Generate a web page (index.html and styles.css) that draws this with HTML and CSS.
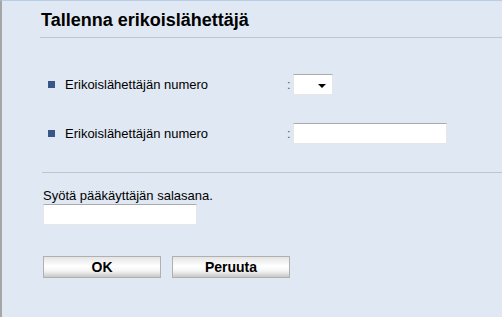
FILE: index.html
```html
<!DOCTYPE html>
<html lang="fi">
<head>
    <meta charset="UTF-8">
    <title>Tallenna erikoislähettäjä</title>
    <link rel="stylesheet" href="styles.css">
</head>
<body>
    <div class="page">
        <div class="title">Tallenna erikoislähettäjä</div>

        <div class="fields">
            <div class="field-row">
                <span class="bullet"></span>
                <span class="label">Erikoislähettäjän numero</span>
                <span class="colon">:</span>
                <div class="select-box"><span class="arrow"></span></div>
            </div>
            <div class="field-row">
                <span class="bullet"></span>
                <span class="label">Erikoislähettäjän numero</span>
                <span class="colon">:</span>
                <div class="text-box wide"></div>
            </div>
        </div>

        <div class="password">
            <div class="pw-label">Syötä pääkäyttäjän salasana.</div>
            <div class="text-box pw"></div>
        </div>

        <div class="buttons">
            <button class="btn">OK</button>
            <button class="btn">Peruuta</button>
        </div>
    </div>
</body>
</html>
```

FILE: styles.css
```css
html, body {
    margin: 0;
    height: 100%;
}
body {
    font-family: "Liberation Sans", Arial, sans-serif;
    font-size: 13px;
    color: #000;
    background-color: #dfe8f3;
}
.page {
    border-top: 1px solid #b8cde6;
    border-left: 2px solid #a6a6a6;
    box-sizing: border-box;
    height: 317px;
}
.title {
    margin-left: 38px;
    padding: 9px 0 6px 1px;
    font-size: 18px;
    font-weight: bold;
    border-bottom: 1px solid #bcc6d2;
    line-height: 21px;
}
.fields {
    padding: 36px 0 0 46px;
}
.field-row {
    display: flex;
    align-items: center;
    height: 21px;
    margin-bottom: 28px;
}
.bullet {
    width: 7px;
    height: 7px;
    background-color: #3a5688;
    margin-right: 10px;
}
.label {
    width: 222px;
}
.colon {
    width: 6px;
    color: #555;
}
.select-box,
.text-box {
    height: 21px;
    box-sizing: border-box;
    background-color: #fff;
    border-top: 1px solid #aaa;
    border-left: 1px solid #e6e6e6;
    border-right: 1px solid #e6e6e6;
    border-bottom: 1px solid #e6e6e6;
}
.select-box {
    width: 40px;
    position: relative;
}
.arrow {
    position: absolute;
    right: 6px;
    top: 9px;
    border-left: 4px solid transparent;
    border-right: 4px solid transparent;
    border-top: 4px solid #000;
}
.wide {
    width: 154px;
}
.password {
    margin-left: 40px;
    border-top: 1px solid #bcc6d2;
    padding: 15px 0 0 1px;
}
.pw-label {
    line-height: 15px;
    margin-bottom: 1px;
}
.pw {
    width: 154px;
}
.buttons {
    display: flex;
    gap: 11px;
    padding: 31px 0 0 41px;
}
.btn {
    width: 118px;
    height: 22px;
    padding: 0;
    font-family: "Liberation Sans", Arial, sans-serif;
    font-size: 14px;
    font-weight: bold;
    border: 1px solid #b0b0b0;
    background: linear-gradient(#e4e4e4, #ffffff 45%, #f4f4f4 70%, #c8c8c8);
}
```
